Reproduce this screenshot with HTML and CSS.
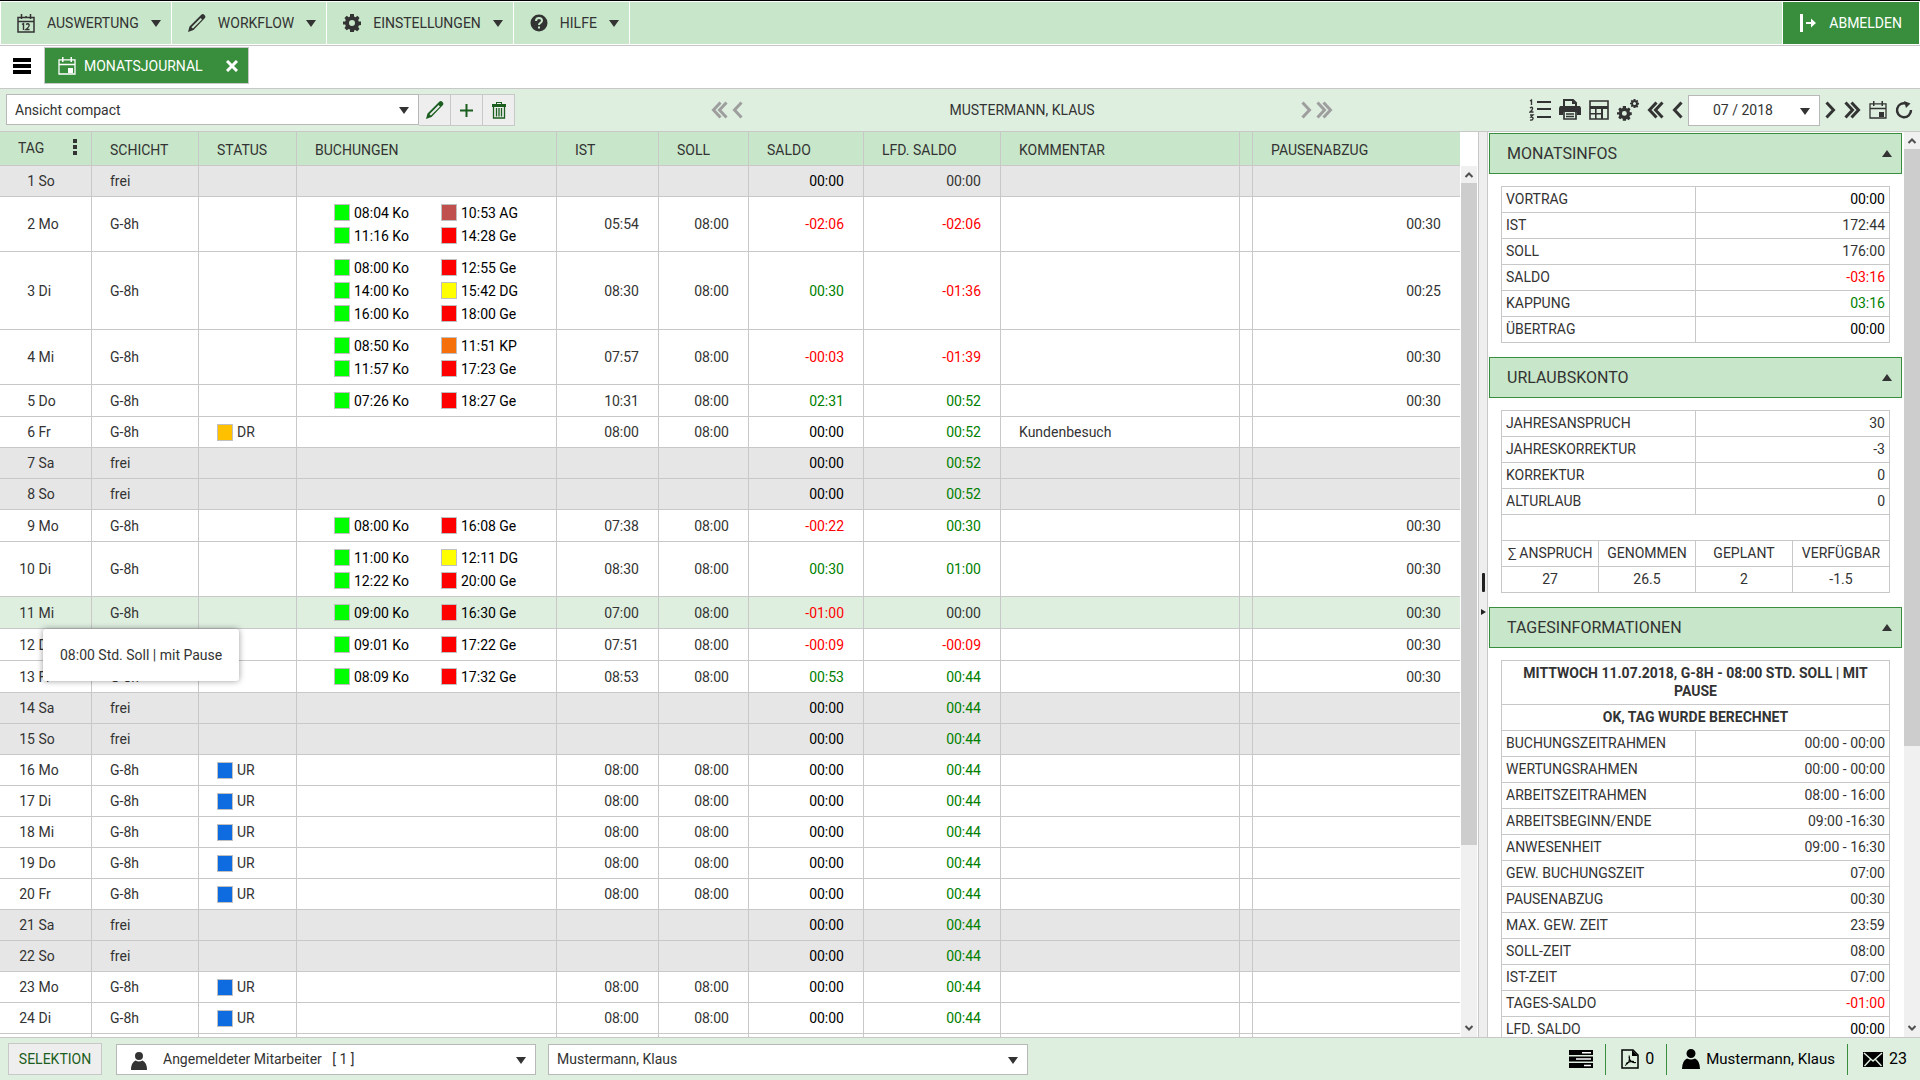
FILE: index.html
```html
<!DOCTYPE html>
<html lang="de">

<head>
    <meta charset="UTF-8">
    <meta name="viewport" content="width=device-width, initial-scale=1">
    <title>Monatsjournal</title>
    <link rel="stylesheet" href="styles.css">
</head>

<body>
    <nav class="menubar">
        <button class="menu_item">
            <svg width="18" height="19" viewBox="0 0 18 19"><path d="M1 3.500h16v14.500H1zM1 7.500h16M4.500 0v5M13.500 0v5M9 2v2" fill="none" stroke="#333" stroke-width="1.500"/><path d="M5 10.500l1.500-1v6.500M9 10.500q2-1.500 3 0t-3 5h3.500" fill="none" stroke="#333" stroke-width="1.400"/></svg>
            AUSWERTUNG <span class="caret"></span>
        </button>
        <button class="menu_item">
            <svg width="18" height="18" viewBox="0 0 18 18"><use href="#pencil"/></svg>
            WORKFLOW <span class="caret"></span>
        </button>
        <button class="menu_item">
            <svg width="18" height="18" viewBox="0 0 18 18"><use href="#gear"/></svg>
            EINSTELLUNGEN <span class="caret"></span>
        </button>
        <button class="menu_item">
            <svg width="18" height="18" viewBox="0 0 18 18"><circle cx="9" cy="9" r="8.500" fill="#333"/><path d="M6 7q0-3 3-3t3 2.500q0 1.500-1.500 2.300Q9 9.600 9 11" fill="none" stroke="#c8e6c9" stroke-width="2"/><rect x="8" y="12.500" width="2" height="2" fill="#c8e6c9"/></svg>
            HILFE <span class="caret"></span>
        </button>
        <button class="logout">
            <svg width="18" height="18" viewBox="0 0 18 18"><path d="M1 0h3v18H1zM7 8h5V4.500L17 9l-5 4.500V10H7z" fill="#fff"/></svg>
            ABMELDEN
        </button>
    </nav>

    <div class="tabbar">
        <button class="burger" aria-label="Navigation">
            <svg width="18" height="16" viewBox="0 0 18 16"><path d="M0 0h18v4H0zM0 6h18v4H0zM0 12h18v4H0z"/></svg>
        </button>
        <div class="tab">
            <svg width="18" height="18" viewBox="0 0 18 18"><g color="#fff"><use href="#calendar"/></g></svg>
            <a href="#journal">MONATSJOURNAL</a>
            <button aria-label="Schließen"><svg width="12" height="12" viewBox="0 0 12 12"><path d="M1 1l10 10M11 1L1 11" stroke="#fff" stroke-width="3"/></svg></button>
        </div>
    </div>

    <div class="toolbar">
        <div class="view_group">
            <span class="dropdown view_select">
                <select aria-label="Ansicht"><option>Ansicht compact</option></select>
            </span>
            <button class="tool" aria-label="Bearbeiten"><svg width="18" height="18" viewBox="0 0 18 18"><g color="#1b5e20"><use href="#pencil"/></g></svg></button>
            <button class="tool" aria-label="Hinzufügen"><svg width="13" height="13" viewBox="0 0 13 13"><path d="M5.500 0h2v5.500H13v2H7.500V13h-2V7.500H0v-2h5.500z" fill="#1b5e20"/></svg></button>
            <button class="tool" aria-label="Löschen"><svg width="14" height="17" viewBox="0 0 14 17"><path d="M0 2h14v3H0zM4 0h6v2H9V1H5v1H4z" fill="#1b5e20"/><path d="M1.500 5v11h11V5M4.500 6v8.500M7 6v8.500M9.500 6v8.500" fill="none" stroke="#1b5e20" stroke-width="1.300"/></svg></button>
        </div>

        <div class="person_nav">
            <div class="arrows grey">
                <button aria-label="Erster"><svg width="17" height="18" viewBox="0 0 17 18"><use href="#double_left"/></svg></button>
                <button aria-label="Vorheriger"><svg width="11" height="18" viewBox="0 0 11 18"><use href="#left"/></svg></button>
            </div>
            <span>MUSTERMANN, KLAUS</span>
            <div class="arrows grey">
                <button aria-label="Nächster"><svg width="11" height="18" viewBox="0 0 11 18"><use href="#right"/></svg></button>
                <button aria-label="Letzter"><svg width="17" height="18" viewBox="0 0 17 18"><use href="#double_right"/></svg></button>
            </div>
        </div>

        <div class="month_nav">
            <div class="arrows">
                <button aria-label="Liste"><svg width="22" height="22" viewBox="0 0 22 22"><path d="M8 3h14M8 10h14M8 18h14" stroke="#333" stroke-width="2"/><path d="M1 2l1.500-1v5M1 9q2-1.500 2.500 0T1 13h3.500M1 16h3l-2 2q2.500 0 2 1.700T1 21" fill="none" stroke="#333" stroke-width="1.300"/></svg></button>
                <button aria-label="Drucken"><svg width="22" height="22" viewBox="0 0 22 22"><path d="M5 7V1h9l3 3v3" fill="none" stroke="#333" stroke-width="2"/><path d="M13 1v4h4M1 7h20l1 2v7h-4v-3H4v3H0V9z" fill="#333"/><path d="M5 13v7h12v-7M7 15h8M7 17.500h8" fill="none" stroke="#333" stroke-width="1.700"/></svg></button>
                <button aria-label="Rechner"><svg width="20" height="20" viewBox="0 0 20 20"><path d="M1 1h18v18H1z" fill="none" stroke="#333" stroke-width="1.600"/><path d="M1 6h18v3H1zM6 7h1.600v12H6zM12 7h2v12h-2zM1 13h12v1.600H1z" fill="#333"/></svg></button>
                <button aria-label="Optionen"><svg width="22" height="22" viewBox="0 0 22 22"><g transform="translate(0 7) scale(.82)"><use href="#gear"/></g><g transform="translate(13) scale(.5)"><use href="#gear"/></g></svg></button>
                <button aria-label="Jahr zurück"><svg width="17" height="18" viewBox="0 0 17 18"><use href="#double_left"/></svg></button>
                <button aria-label="Monat zurück"><svg width="11" height="18" viewBox="0 0 11 18"><use href="#left"/></svg></button>
            </div>
            <span class="dropdown month_select">
                <select aria-label="Monat"><option>07 / 2018</option></select>
            </span>
            <div class="arrows">
                <button aria-label="Monat vor"><svg width="11" height="18" viewBox="0 0 11 18"><use href="#right"/></svg></button>
                <button aria-label="Jahr vor"><svg width="17" height="18" viewBox="0 0 17 18"><use href="#double_right"/></svg></button>
                <button aria-label="Heute"><svg width="18" height="18" viewBox="0 0 18 18"><use href="#calendar"/></svg></button>
                <button aria-label="Aktualisieren"><svg width="18" height="18" viewBox="0 0 18 18"><path d="M11.500 2.700A7 7 0 1 0 16 9" fill="none" stroke="#333" stroke-width="2.400"/><path d="M9 0l6.500 2.500L11 7z" fill="#333"/></svg></button>
            </div>
        </div>
    </div>

    <main>
        <section class="journal" id="journal">
            <table class="journal_table">
                <colgroup>
                    <col class="c_tag"><col class="c_schicht"><col class="c_status"><col class="c_buchungen">
                    <col class="c_ist"><col class="c_soll"><col class="c_saldo"><col class="c_lfd">
                    <col><col class="c_gap"><col class="c_pause">
                </colgroup>
                <thead>
                    <tr>
                        <th><div class="tag_head">TAG <svg width="4" height="16" viewBox="0 0 4 16"><path d="M0 0h4v4H0zM0 6h4v4H0zM0 12h4v4H0z" fill="#333"/></svg></div></th>
                        <th>SCHICHT</th>
                        <th>STATUS</th>
                        <th>BUCHUNGEN</th>
                        <th>IST</th>
                        <th>SOLL</th>
                        <th>SALDO</th>
                        <th>LFD. SALDO</th>
                        <th>KOMMENTAR</th>
                        <th></th>
                        <th>PAUSENABZUG</th>
                    </tr>
                </thead>
                <tbody id="journal_rows"></tbody>
            </table>
            <div class="scrollbar below_head">
                <svg width="16" height="17" viewBox="0 0 16 17"><use href="#scroll_up"/></svg>
                <div class="thumb journal_thumb"></div>
                <svg width="16" height="17" viewBox="0 0 16 17"><use href="#scroll_down"/></svg>
            </div>
        </section>

        <div class="splitter">
            <span class="grip"></span>
            <svg width="5" height="6" viewBox="0 0 5 6"><path d="M0 0l5 3-5 3z" fill="#222"/></svg>
        </div>

        <aside>
            <div class="panels">
                <button class="panel_head">MONATSINFOS <span class="caret up"></span></button>
                <table class="info">
                    <tr><td>VORTRAG</td><td class="black">00:00</td></tr>
                    <tr><td>IST</td><td>172:44</td></tr>
                    <tr><td>SOLL</td><td>176:00</td></tr>
                    <tr><td>SALDO</td><td class="red">-03:16</td></tr>
                    <tr><td>KAPPUNG</td><td class="green">03:16</td></tr>
                    <tr><td>ÜBERTRAG</td><td class="black">00:00</td></tr>
                </table>

                <button class="panel_head">URLAUBSKONTO <span class="caret up"></span></button>
                <table class="info">
                    <tr><td colspan="2">JAHRESANSPRUCH</td><td colspan="2">30</td></tr>
                    <tr><td colspan="2">JAHRESKORREKTUR</td><td colspan="2">-3</td></tr>
                    <tr><td colspan="2">KORREKTUR</td><td colspan="2">0</td></tr>
                    <tr><td colspan="2">ALTURLAUB</td><td colspan="2">0</td></tr>
                    <tr><td colspan="4"></td></tr>
                    <tr class="centered"><td>∑ ANSPRUCH</td><td>GENOMMEN</td><td>GEPLANT</td><td>VERFÜGBAR</td></tr>
                    <tr class="centered"><td>27</td><td>26.5</td><td>2</td><td>-1.5</td></tr>
                </table>

                <button class="panel_head">TAGESINFORMATIONEN <span class="caret up"></span></button>
                <table class="info">
                    <tr><th colspan="2">MITTWOCH 11.07.2018, G-8H - 08:00 STD. SOLL | MIT PAUSE</th></tr>
                    <tr><th colspan="2">OK, TAG WURDE BERECHNET</th></tr>
                    <tr><td>BUCHUNGSZEITRAHMEN</td><td>00:00 - 00:00</td></tr>
                    <tr><td>WERTUNGSRAHMEN</td><td>00:00 - 00:00</td></tr>
                    <tr><td>ARBEITSZEITRAHMEN</td><td>08:00 - 16:00</td></tr>
                    <tr><td>ARBEITSBEGINN/ENDE</td><td>09:00 -16:30</td></tr>
                    <tr><td>ANWESENHEIT</td><td>09:00 - 16:30</td></tr>
                    <tr><td>GEW. BUCHUNGSZEIT</td><td>07:00</td></tr>
                    <tr><td>PAUSENABZUG</td><td>00:30</td></tr>
                    <tr><td>MAX. GEW. ZEIT</td><td>23:59</td></tr>
                    <tr><td>SOLL-ZEIT</td><td>08:00</td></tr>
                    <tr><td>IST-ZEIT</td><td>07:00</td></tr>
                    <tr><td>TAGES-SALDO</td><td class="red">-01:00</td></tr>
                    <tr><td>LFD. SALDO</td><td class="black">00:00</td></tr>
                </table>
            </div>
            <div class="scrollbar">
                <svg width="16" height="17" viewBox="0 0 16 17"><use href="#scroll_up"/></svg>
                <div class="thumb panel_thumb"></div>
                <svg width="16" height="17" viewBox="0 0 16 17"><use href="#scroll_down"/></svg>
            </div>
        </aside>
    </main>

    <footer>
        <button class="selection">SELEKTION</button>
        <span class="dropdown group_select">
            <svg class="select_icon" width="16" height="18" viewBox="0 0 18 20"><g color="#333"><use href="#person"/></g></svg>
            <select aria-label="Gruppe"><option>Angemeldeter Mitarbeiter &nbsp; [ 1 ]</option></select>
        </span>
        <span class="dropdown person_select">
            <select aria-label="Mitarbeiter"><option>Mustermann, Klaus</option></select>
        </span>
        <div class="status">
            <a href="#server" aria-label="Server"><svg width="24" height="18" viewBox="0 0 24 18"><path d="M0 0h24v5H0zM0 6.500h24v5H0zM0 13h24v5H0z"/><path d="M13 2h9v1.500h-9zM7 8.300h15v1.500H7zM15 14.800h7v1.500h-7z" fill="#fff"/></svg></a>
            <a href="#pdf"><svg width="18" height="20" viewBox="0 0 18 20"><path d="M1 1h11l5 5v13H1z" fill="none" stroke="#000" stroke-width="1.500"/><path d="M11 1v6h6z"/><path d="M8 6.500c2 4-1 9-4 10M8 8c0 4 4 6 7 5.500M5 14.500q4-2.500 8-2" fill="none" stroke="#000" stroke-width="1.100"/></svg> 0</a>
            <a href="#user" class="user"><svg width="18" height="20" viewBox="0 0 18 20"><g color="#000"><use href="#person"/></g></svg> Mustermann, Klaus</a>
            <a href="#mail"><svg width="20" height="15" viewBox="0 0 20 15"><path d="M0 0h20v15H0z"/><path d="M1 1l9 8 9-8M1.500 14L7.500 7.500M18.500 14l-6-6.500" fill="none" stroke="#deefe0" stroke-width="1.400"/></svg> 23</a>
        </div>
    </footer>

    <!-- shared icon shapes -->
    <svg class="symbols" width="0" height="0">
        <defs>
            <path id="pencil" d="M0 18l1.500-5.500L12.500 1.500l1-1q1.500-1 3 .5t.5 3l-1 1L5.500 16zM3.500 13.200l1.400 1.400L14 5.500 12.600 4z" fill="currentColor" fill-rule="evenodd"/>
            <path id="gear" d="M7 0h4v2.500l1.500.7 2-1.500 2 2.300-1.300 2 .6 1.500H18v3.500l-2.200.5-.6 1.500 1.300 2-2.300 2.300-2-1.300-1.200.6V18H7v-2.400l-1.300-.6-2 1.300L1.500 14l1.300-2-.6-1.500L0 10.500V7.500h2.200L2.800 6 1.500 4l2.200-2.300 2 1.500L7 2.500zM9 6a3 3 0 1 0 0 6 3 3 0 0 0 0-6z" fill="#333" fill-rule="evenodd"/>
            <g id="calendar"><path d="M1 2.800h16V17H1zM1 7.500h16" fill="none" stroke="currentColor" stroke-width="1.300"/><path d="M4 0h1.500v5H4zM12.500 0H14v5h-1.500zM10 11h5v5h-5z" fill="currentColor"/></g>
            <path id="left" d="M9.500 1.500L2.500 9l7 7.500" fill="none" stroke="currentColor" stroke-width="3"/>
            <path id="right" d="M1.500 1.500l7 7.500-7 7.500" fill="none" stroke="currentColor" stroke-width="3"/>
            <path id="double_left" d="M9.500 1.500L2.500 9l7 7.500M15.500 1.500L8.500 9l7 7.500" fill="none" stroke="currentColor" stroke-width="3"/>
            <path id="double_right" d="M1.500 1.500l7 7.500-7 7.500M7.500 1.500l7 7.500-7 7.500" fill="none" stroke="currentColor" stroke-width="3"/>
            <path id="person" d="M9 0a4.500 4.500 0 0 1 0 9 4.500 4.500 0 0 1 0-9zM0 20q0-8 5-10.500 4 2 8 0 5 2.500 5 10.500z" fill="currentColor"/>
            <path id="scroll_up" d="M4.500 11L8 7.500l3.500 3.500" fill="none" stroke="#505050" stroke-width="2"/>
            <path id="scroll_down" d="M4.500 6L8 9.500 11.500 6" fill="none" stroke="#505050" stroke-width="2"/>
        </defs>
    </svg>

    <script>
        // day, shift, status, bookings, ist, soll, saldo, running saldo, comment, break
        let days = [
            ["1 So", "frei", "", [], "", "", "00:00", "00:00", "", ""],
            ["2 Mo", "G-8h", "", ["08:04 Ko", "10:53 AG", "11:16 Ko", "14:28 Ge"], "05:54", "08:00", "-02:06", "-02:06", "", "00:30"],
            ["3 Di", "G-8h", "", ["08:00 Ko", "12:55 Ge", "14:00 Ko", "15:42 DG", "16:00 Ko", "18:00 Ge"], "08:30", "08:00", "00:30", "-01:36", "", "00:25"],
            ["4 Mi", "G-8h", "", ["08:50 Ko", "11:51 KP", "11:57 Ko", "17:23 Ge"], "07:57", "08:00", "-00:03", "-01:39", "", "00:30"],
            ["5 Do", "G-8h", "", ["07:26 Ko", "18:27 Ge"], "10:31", "08:00", "02:31", "00:52", "", "00:30"],
            ["6 Fr", "G-8h", "DR", [], "08:00", "08:00", "00:00", "00:52", "Kundenbesuch", ""],
            ["7 Sa", "frei", "", [], "", "", "00:00", "00:52", "", ""],
            ["8 So", "frei", "", [], "", "", "00:00", "00:52", "", ""],
            ["9 Mo", "G-8h", "", ["08:00 Ko", "16:08 Ge"], "07:38", "08:00", "-00:22", "00:30", "", "00:30"],
            ["10 Di", "G-8h", "", ["11:00 Ko", "12:11 DG", "12:22 Ko", "20:00 Ge"], "08:30", "08:00", "00:30", "01:00", "", "00:30"],
            ["11 Mi", "G-8h", "", ["09:00 Ko", "16:30 Ge"], "07:00", "08:00", "-01:00", "00:00", "", "00:30"],
            ["12 Do", "G-8h", "", ["09:01 Ko", "17:22 Ge"], "07:51", "08:00", "-00:09", "-00:09", "", "00:30"],
            ["13 Fr", "G-8h", "", ["08:09 Ko", "17:32 Ge"], "08:53", "08:00", "00:53", "00:44", "", "00:30"],
            ["14 Sa", "frei", "", [], "", "", "00:00", "00:44", "", ""],
            ["15 So", "frei", "", [], "", "", "00:00", "00:44", "", ""],
            ["16 Mo", "G-8h", "UR", [], "08:00", "08:00", "00:00", "00:44", "", ""],
            ["17 Di", "G-8h", "UR", [], "08:00", "08:00", "00:00", "00:44", "", ""],
            ["18 Mi", "G-8h", "UR", [], "08:00", "08:00", "00:00", "00:44", "", ""],
            ["19 Do", "G-8h", "UR", [], "08:00", "08:00", "00:00", "00:44", "", ""],
            ["20 Fr", "G-8h", "UR", [], "08:00", "08:00", "00:00", "00:44", "", ""],
            ["21 Sa", "frei", "", [], "", "", "00:00", "00:44", "", ""],
            ["22 So", "frei", "", [], "", "", "00:00", "00:44", "", ""],
            ["23 Mo", "G-8h", "UR", [], "08:00", "08:00", "00:00", "00:44", "", ""],
            ["24 Di", "G-8h", "UR", [], "08:00", "08:00", "00:00", "00:44", "", ""]
        ];

        function swatch(code) {
            return '<i class="swatch ' + code.toLowerCase() + '"></i>';
        }

        function saldoClass(value) {
            if (value[0] == "-") {
                return "red";
            }
            return value == "00:00" ? "zero" : "green";
        }

        let html = "";
        for (let day of days) {
            let [number, name] = day[0].split(" ");
            let rowClass = day[1] == "frei" ? "free" : "";
            let tooltip = "";
            if (number == "11") {
                rowClass = "selected";
                tooltip = '<div class="tooltip" role="tooltip">08:00 Std. Soll | mit Pause</div>';
            }
            let bookings = day[3].map(b => "<span>" + swatch(b.slice(6)) + b + "</span>").join("");

            html += '<tr class="' + rowClass + '">'
                + '<td><span class="day_number">' + number + "</span> " + name + tooltip + "</td>"
                + "<td>" + day[1] + "</td>"
                + "<td>" + (day[2] ? '<span class="state">' + swatch(day[2]) + day[2] + "</span>" : "") + "</td>"
                + '<td class="booking_cell">' + (bookings ? '<div class="bookings">' + bookings + "</div>" : "") + "</td>"
                + '<td class="num">' + day[4] + "</td>"
                + '<td class="num">' + day[5] + "</td>"
                + '<td class="num saldo ' + saldoClass(day[6]) + '">' + day[6] + "</td>"
                + '<td class="num ' + saldoClass(day[7]) + '">' + day[7] + "</td>"
                + "<td>" + day[8] + "</td>"
                + "<td></td>"
                + '<td class="num">' + day[9] + "</td></tr>";
        }
        // empty row that runs out under the footer
        html += "<tr>" + "<td></td>".repeat(11) + "</tr>";
        document.getElementById("journal_rows").innerHTML = html;
    </script>
</body>

</html>
```
FILE: styles.css
```css
*{
    box-sizing: border-box;
}

body{
    margin: 0px;
    height: 100vh;
    display: flex;
    flex-direction: column;
    overflow: hidden;
    font-family: Roboto, sans-serif;
    font-size: 14px;
    line-height: 18px;
    color: #333;
    background-color: white;
}

button, select{
    font: inherit;
    color: inherit;
    background: none;
    border: none;
    padding: 0px;
    margin: 0px;
}

a{
    color: inherit;
    text-decoration: none;
}

svg{
    display: block;
    flex: none;
}

.symbols{
    position: absolute;
}

.caret{
    border: 5px solid transparent;
    border-top: 7px solid #333;
    border-bottom: none;
}
.caret.up{
    border-top: none;
    border-bottom: 7px solid #333;
}

/* menu */
.menubar{
    display: flex;
    height: 46px;
    flex: none;
    border-top: 1px solid black;
    border-bottom: 1px solid #c8c8c8;
    padding: 1px;
    background-color: #c8e6c9;
    background-clip: content-box;
}
.menu_item{
    display: flex;
    align-items: center;
    gap: 12px;
    padding: 0px 10px 0px 16px;
    border-right: 1px solid white;
}
.logout{
    display: flex;
    align-items: center;
    gap: 12px;
    margin-left: auto;
    padding: 0px 17px 0px 16px;
    color: white;
    background-color: #388e3c;
    border-left: 1px solid white;
}

/* tabs */
.tabbar{
    display: flex;
    align-items: flex-start;
    height: 43px;
    flex: none;
    border-bottom: 1px solid #c8c8c8;
}
.burger{
    padding: 12px 13px;
}
.tab{
    display: flex;
    align-items: center;
    height: 37px;
    margin-top: 1px;
    padding: 0px 10px 0px 13px;
    color: white;
    background-color: #388e3c;
    border: 1px solid #c8c8c8;
}
.tab a{
    margin: 0px 23px 0px 8px;
}

/* toolbar */
.toolbar{
    display: flex;
    align-items: center;
    height: 43px;
    flex: none;
    padding: 0px 7px 0px 6px;
    background-color: #deefe0;
    border-bottom: 1px solid #c8c8c8;
}
.view_group{
    display: flex;
}
.dropdown{
    position: relative;
    display: flex;
    height: 31px;
    background-color: white;
    border: 1px solid #b8b8b8;
}
.dropdown::after{
    content: "";
    position: absolute;
    right: 9px;
    top: 12px;
    border: 5px solid transparent;
    border-top: 7px solid #333;
    border-bottom: none;
    pointer-events: none;
}
.dropdown select{
    appearance: none;
    width: 100%;
    padding: 0px 24px 0px 8px;
}
.view_select{
    width: 413px;
}
.tool{
    display: flex;
    align-items: center;
    justify-content: center;
    width: 32px;
    height: 32px;
    background-color: #eee;
    border: 1px solid #c8c8c8;
    border-left: none;
}
.person_nav{
    display: flex;
    justify-content: space-between;
    align-items: center;
    width: 622px;
    margin: 0px auto;
}
.month_nav{
    display: flex;
    align-items: center;
    gap: 5px;
}
.arrows{
    display: flex;
    align-items: center;
    gap: 8px;
}
.arrows.grey{
    color: #9e9e9e;
    gap: 4px;
}
.month_select{
    width: 132px;
}
.month_select select{
    padding: 0px 24px;
}

/* main area */
main{
    display: flex;
    flex: 1;
    min-height: 0px;
}
.journal{
    display: flex;
    align-items: flex-start;
    flex: 1;
    min-width: 0px;
    overflow: hidden;
}
.journal_table{
    flex: 1;
    min-width: 0px;
    table-layout: fixed;
    border-spacing: 0px;
}
.c_tag{ width: 92px; }
.c_schicht{ width: 107px; }
.c_status{ width: 98px; }
.c_buchungen{ width: 260px; }
.c_ist{ width: 102px; }
.c_soll{ width: 90px; }
.c_saldo{ width: 115px; }
.c_lfd{ width: 137px; }
.c_gap{ width: 13px; }
.c_pause{ width: 207px; }

.journal_table th{
    height: 34px;
    padding: 2px 18px 0px 18px;
    font-weight: normal;
    text-align: left;
    white-space: nowrap;
    background-color: #c8e6c9;
    border-right: 1px solid #c8c8c8;
    border-bottom: 1px solid #c8c8c8;
}
.journal_table td{
    position: relative;
    height: 31px;
    padding: 0px 19px 0px 18px;
    white-space: nowrap;
    border-right: 1px solid #c8c8c8;
    border-bottom: 1px solid #c8c8c8;
}
.journal_table th:last-child, .journal_table td:last-child{
    border-right: none;
}
.journal_table th:nth-child(10), .journal_table td:nth-child(10){
    padding: 0px;
}
.journal_table .num{
    text-align: right;
}
.journal_table .booking_cell{
    padding: 0px 0px 0px 37px;
}
.tag_head{
    display: flex;
    justify-content: space-between;
    margin: 0px -4px 4px 0px;
}
.day_number{
    display: inline-block;
    width: 17px;
    text-align: right;
}
.free{
    background-color: #e6e6e6;
}
.selected{
    background-color: #deefe0;
}
.bookings{
    display: grid;
    grid-template-columns: 107px 107px;
    padding: 4px 0px;
    color: black;
}
.bookings span, .state{
    display: flex;
    align-items: center;
    gap: 4px;
    height: 23px;
}
.swatch{
    width: 16px;
    height: 17px;
    border: 1px solid #c0c0c0;
}
.ko{ background-color: #00ff00; }
.ge{ background-color: #ff0000; }
.ag{ background-color: #c0504d; }
.dg{ background-color: #ffff00; }
.kp{ background-color: #f5700a; }
.dr{ background-color: #ffc000; }
.ur{ background-color: #0f6be0; }

.red{ color: red; }
.green{ color: green; }
.black, .saldo.zero{ color: black; }

.tooltip{
    position: absolute;
    left: 43px;
    top: 32px;
    z-index: 1;
    padding: 17px;
    background-color: white;
    border-radius: 3px;
    box-shadow: 0px 0px 6px rgba(0, 0, 0, 0.4);
}

/* scrollbars */
.scrollbar{
    display: flex;
    flex-direction: column;
    width: 16px;
    height: 100%;
    flex: none;
    background-color: #f0f0f0;
}
.below_head{
    height: calc(100% - 34px);
    margin: 34px 1px 0px 1px;
}
.scrollbar svg:last-child{
    margin-top: auto;
}
.thumb{
    background-color: #cdcdcd;
}
.journal_thumb{
    height: 76%;
}
.panel_thumb{
    height: 66%;
}

.splitter{
    display: flex;
    flex-direction: column;
    align-items: center;
    justify-content: center;
    gap: 17px;
    width: 10px;
    padding-top: 18px;
    flex: none;
    background-color: #eee;
    border: 1px solid #c8c8c8;
    border-width: 0px 1px;
}
.grip{
    width: 3px;
    height: 19px;
    border-radius: 1px;
    background-color: #222;
}

/* info panels */
aside{
    display: flex;
    width: 432px;
    flex: none;
    overflow: hidden;
}
.panels{
    flex: 1;
    padding: 1px 2px 0px 1px;
}
.panel_head{
    display: flex;
    align-items: center;
    justify-content: space-between;
    width: 100%;
    height: 41px;
    padding: 0px 9px 0px 17px;
    font-size: 16px;
    background-color: #c8e6c9;
    border: 1px solid #388e3c;
}
.info{
    width: calc(100% - 24px);
    margin: 12px 12px 14px 12px;
    table-layout: fixed;
    border-collapse: collapse;
}
.info td, .info th{
    height: 26px;
    padding: 3px 4px 4px 4px;
    border: 1px solid #c8c8c8;
}
.info td:last-child{
    text-align: right;
}
.info .centered td{
    text-align: center;
    padding: 3px 0px 4px 0px;
}

/* footer */
footer{
    display: flex;
    align-items: center;
    height: 43px;
    flex: none;
    padding: 0px 13px 0px 8px;
    background-color: #deefe0;
    border-top: 1px solid #c8c8c8;
}
.selection{
    width: 94px;
    height: 32px;
    color: #1b5e20;
    background-color: #eee;
    border: 1px solid #c8c8c8;
}
.group_select{
    width: 420px;
    margin: 0px 12px 0px 14px;
}
.group_select select{
    padding-left: 46px;
}
.select_icon{
    position: absolute;
    left: 14px;
    top: 7px;
    pointer-events: none;
}
.person_select{
    width: 480px;
}
.status{
    display: flex;
    margin-left: auto;
    color: black;
    font-size: 16px;
}
.status a{
    display: flex;
    align-items: center;
    gap: 6px;
    height: 31px;
    padding: 0px 12px 0px 15px;
    border-left: 1px solid #388e3c;
}
.status a:first-child{
    border-left: none;
}
.status a:last-child{
    padding-right: 0px;
}
.status .user{
    font-size: 15px;
}
```
